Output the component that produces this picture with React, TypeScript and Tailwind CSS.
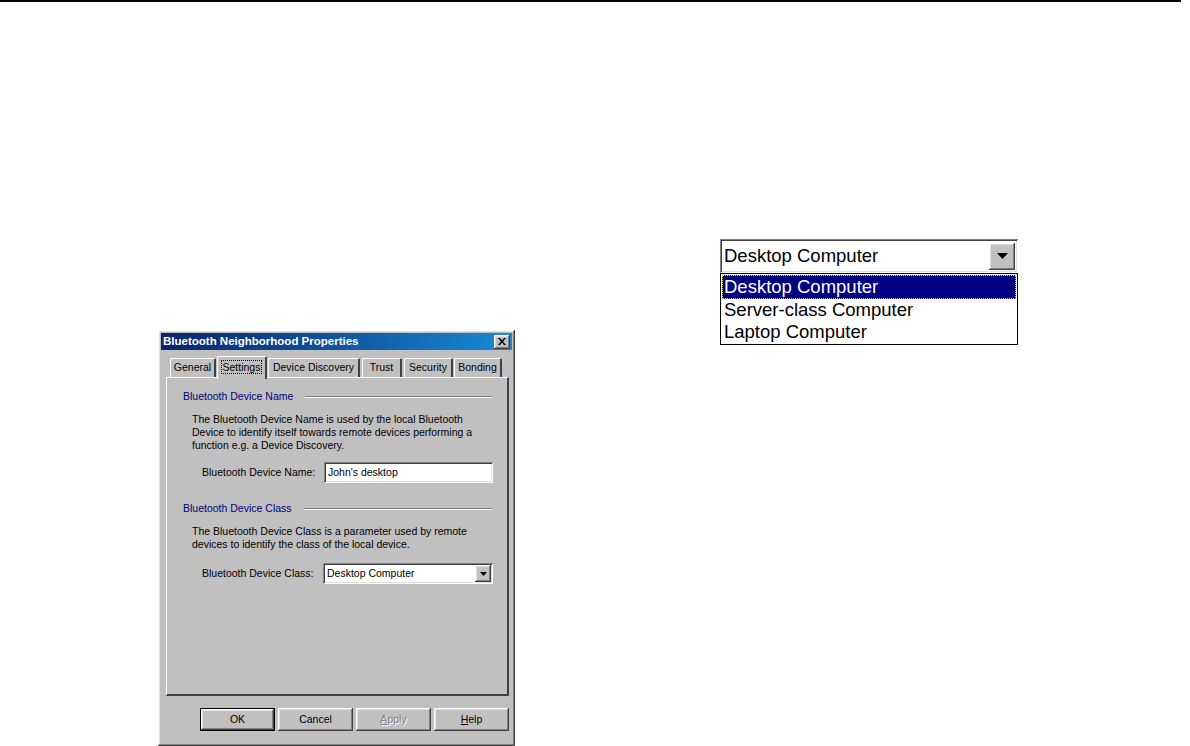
import React from "react";

const raised =
  "shadow-[inset_-1px_-1px_#404040,inset_1px_1px_#ffffff,inset_-2px_-2px_#808080,inset_2px_2px_#dfdfdf]";
const sunken =
  "shadow-[inset_1px_1px_#808080,inset_-1px_-1px_#ffffff,inset_2px_2px_#404040,inset_-2px_-2px_#dfdfdf]";

const tabs = [
  { label: "General", w: "w-[46px]", ml: "ml-0" },
  { label: "Settings", w: "w-[50px]", ml: "ml-[1px]", active: true },
  { label: "Device Discovery", w: "w-[92px]", ml: "ml-[1px]" },
  { label: "Trust", w: "w-[40px]", ml: "ml-[2px]" },
  { label: "Security", w: "w-[49px]", ml: "ml-[2px]" },
  { label: "Bonding", w: "w-[48px]", ml: "ml-[1px]" },
];

function Tab({ label, w, ml, active }: { label: string; w: string; ml: string; active?: boolean }) {
  return (
    <div
      className={`${w} ${ml} relative flex items-center justify-center rounded-t-[2px] border-t border-l border-t-white border-l-white border-r-2 border-r-[#404040] bg-[#c0c0c0] ${
        active ? "z-10 h-[23px] -mb-[2px] pb-[2px]" : "h-[19px]"
      }`}
    >
      <span className={active ? "border border-dotted border-black px-[1px] leading-[12px]" : ""}>{label}</span>
    </div>
  );
}

function GroupHeading({ children }: { children: React.ReactNode }) {
  return (
    <div className="flex items-center pl-[16px] pr-[15px]">
      <span className="text-[#000080] leading-[13px]">{children}</span>
      <div className="ml-[12px] flex-1 border-t border-b border-t-[#808080] border-b-white" />
    </div>
  );
}

function Arrow({ size }: { size: "sm" | "lg" }) {
  return size === "sm" ? (
    <svg width="7" height="4" viewBox="0 0 7 4">
      <path d="M0 0h7L3.5 4z" fill="#000" />
    </svg>
  ) : (
    <svg width="11" height="6" viewBox="0 0 11 6">
      <path d="M0 0h11L5.5 6z" fill="#000" />
    </svg>
  );
}

function Button({ children, isDefault }: { children: React.ReactNode; isDefault?: boolean }) {
  return (
    <div className={`h-[23px] w-[75px] ${isDefault ? "border border-black" : ""}`}>
      <div className={`flex h-full w-full items-center justify-center bg-[#c0c0c0] ${raised}`}>{children}</div>
    </div>
  );
}

function Dialog() {
  return (
    <div
      className={`ml-[158px] mt-[328px] flex h-[416px] w-[357px] flex-col bg-[#c0c0c0] p-[3px] text-[10.5px] text-black ${raised}`}
      style={{ fontFamily: '"Liberation Sans", Arial, sans-serif' }}
    >
      <div className="flex h-[17px] items-center justify-between bg-gradient-to-r from-[#0a246a] to-[#1a8ad6] pl-[2px] pr-[2px]">
        <span className="text-[11.5px] font-bold text-white">Bluetooth Neighborhood Properties</span>
        <div className={`flex h-[14px] w-[16px] items-center justify-center bg-[#c0c0c0] ${raised}`}>
          <svg width="8" height="7" viewBox="0 0 8 7">
            <path d="M0 0h2l2 2.5L6 0h2L5 3.5 8 7H6L4 4.5 2 7H0l3-3.5z" fill="#000" />
          </svg>
        </div>
      </div>

      <div className="mt-[7px] flex h-[20px] items-end pl-[9px]">
        {tabs.map((t) => (
          <Tab key={t.label} {...t} />
        ))}
      </div>

      <div className="ml-[5px] flex h-[319px] w-[343px] flex-col border-t border-l border-t-white border-l-white border-r-2 border-b-2 border-r-[#404040] border-b-[#404040]">
        <div className="mt-[12px]">
          <GroupHeading>Bluetooth Device Name</GroupHeading>
        </div>
        <p className="mt-[10px] pl-[25px] leading-[13px]">
          The Bluetooth Device Name is used by the local Bluetooth
          <br />
          Device to identify itself towards remote devices performing a
          <br />
          function e.g. a Device Discovery.
        </p>
        <div className="mt-[10px] flex items-center pl-[35px]">
          <span className="w-[122px]">Bluetooth Device Name:</span>
          <div className={`flex h-[21px] w-[169px] items-center bg-white pl-[4px] ${sunken}`}>John's desktop</div>
        </div>

        <div className="mt-[19px]">
          <GroupHeading>Bluetooth Device Class</GroupHeading>
        </div>
        <p className="mt-[10px] pl-[25px] leading-[13px]">
          The Bluetooth Device Class is a parameter used by remote
          <br />
          devices to identify the class of the local device.
        </p>
        <div className="mt-[12px] flex items-center pl-[35px]">
          <span className="w-[121px]">Bluetooth Device Class:</span>
          <div className={`flex h-[21px] w-[170px] items-center justify-between bg-white p-[2px] pl-[4px] ${sunken}`}>
            <span>Desktop Computer</span>
            <div className={`flex h-[17px] w-[16px] items-center justify-center bg-[#c0c0c0] ${raised}`}>
              <Arrow size="sm" />
            </div>
          </div>
        </div>
      </div>

      <div className="mt-[12px] flex justify-end gap-[3px] pr-[3px]">
        <Button isDefault>OK</Button>
        <Button>Cancel</Button>
        <Button>
          <span className="text-[#808080] [text-shadow:1px_1px_#ffffff]">
            <span className="underline">A</span>pply
          </span>
        </Button>
        <Button>
          <span>
            <span className="underline">H</span>elp
          </span>
        </Button>
      </div>
    </div>
  );
}

function BigCombo() {
  return (
    <div
      className="ml-[205px] mt-[237px] w-[298px] text-[18.5px] text-black"
      style={{ fontFamily: '"Liberation Sans", Arial, sans-serif' }}
    >
      <div className={`flex h-[34px] items-center justify-between bg-white p-[3px] pl-[4px] ${sunken}`}>
        <span>Desktop Computer</span>
        <div className={`flex h-[27px] w-[26px] items-center justify-center bg-[#c0c0c0] ${raised}`}>
          <Arrow size="lg" />
        </div>
      </div>
      <div className="flex flex-col border border-black bg-white p-[1px] leading-[22px]">
        <div className="border border-dotted border-[#d8d060] bg-[#000080] pl-[1px] text-white">Desktop Computer</div>
        <div className="pl-[2px]">Server-class Computer</div>
        <div className="pl-[2px]">Laptop Computer</div>
      </div>
    </div>
  );
}

export default function App() {
  return (
    <div className="h-[746px] w-[1190px] overflow-hidden bg-white">
      <div className="h-[2px] w-[1181px] bg-black" />
      <div className="flex items-start">
        <Dialog />
        <BigCombo />
      </div>
    </div>
  );
}
